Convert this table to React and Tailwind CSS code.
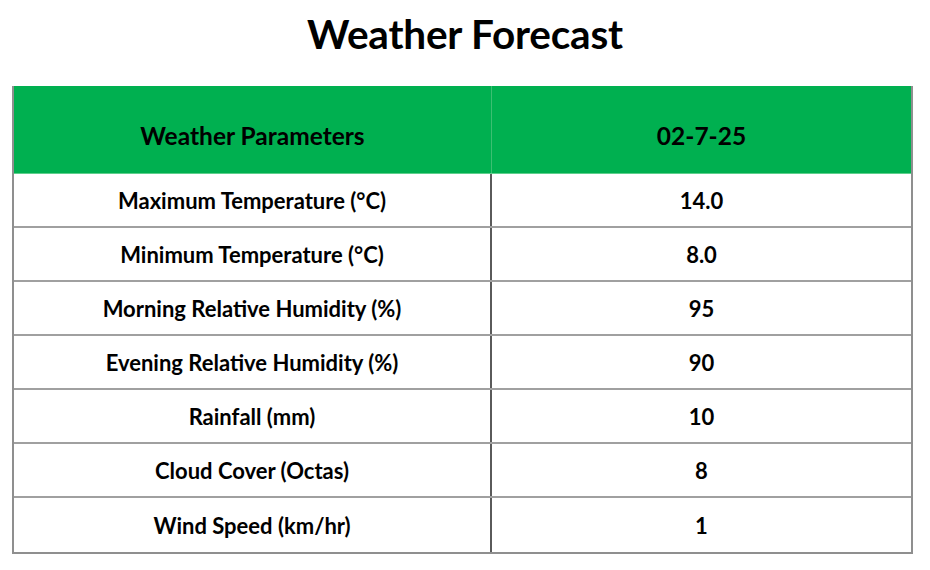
import React from "react";

const rows = [
  { label: "Maximum Temperature (°C)", value: "14.0" },
  { label: "Minimum Temperature (°C)", value: "8.0" },
  { label: "Morning Relative Humidity (%)", value: "95" },
  { label: "Evening Relative Humidity (%)", value: "90" },
  { label: "Rainfall (mm)", value: "10" },
  { label: "Cloud Cover (Octas)", value: "8" },
  { label: "Wind Speed (km/hr)", value: "1" },
];

export default function App() {
  return (
    <div
      className="w-[930px] h-[570px] bg-white text-black"
      style={{ fontFamily: "Lato, 'Open Sans', sans-serif" }}
    >
      <div className="h-[86px] flex justify-center pt-[14px]">
        <h1 className="text-[40.5px] font-bold tracking-[-0.2px] leading-none">Weather Forecast</h1>
      </div>

      <div className="ml-[12px] w-[901px] border-l-2 border-r-2 border-b-2 border-[#8f8f8f]">
        <div className="grid grid-cols-[478px_1fr] h-[88px] bg-[#00b050] border-b border-[#5fcf8c]">
          <div className="flex items-center justify-center pt-[14px] border-r border-[#3cbf72] text-[24.5px] font-bold">
            Weather Parameters
          </div>
          <div className="flex items-center justify-center pt-[14px] text-[24.5px] font-bold">02-7-25</div>
        </div>

        {rows.map((r, i) => (
          <div
            key={r.label}
            className={
              "grid grid-cols-[478px_1fr] h-[54px] " +
              (i < rows.length - 1 ? "border-b-2 border-[#a0a0a0]" : "")
            }
          >
            <div className="flex items-center justify-center border-r-2 border-[#5a5a5a] text-[22px] font-bold">
              {r.label}
            </div>
            <div className="flex items-center justify-center text-[22px] font-bold">{r.value}</div>
          </div>
        ))}
      </div>
    </div>
  );
}
